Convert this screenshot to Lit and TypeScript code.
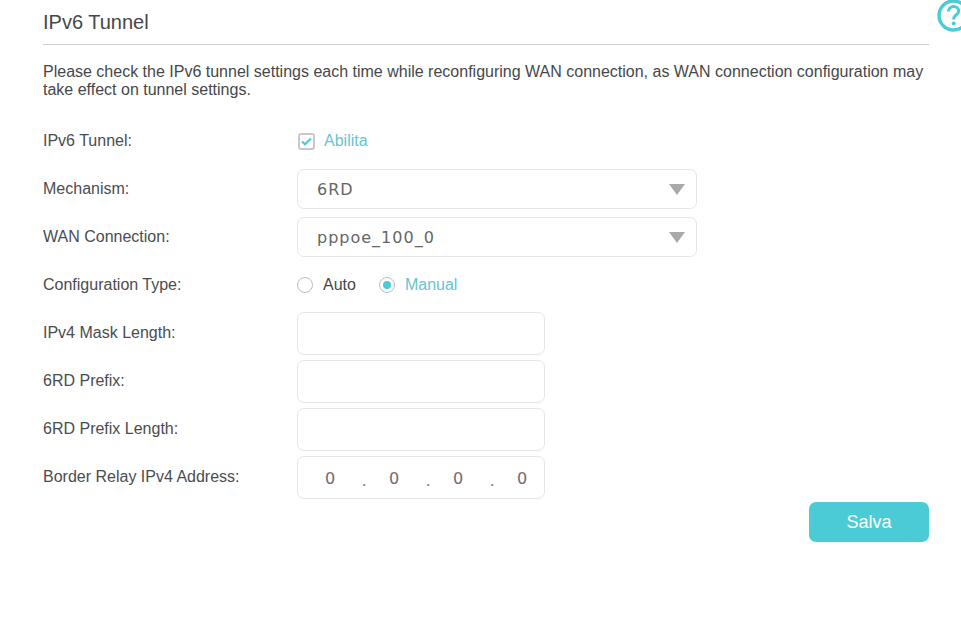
import { LitElement, html, css } from "lit";
import { customElement } from "lit/decorators.js";

@customElement("app-root")
export class AppRoot extends LitElement {
  static styles = css`
    :host { display: block; position: relative; width: 961px; height: 623px; overflow: hidden; background: #fff;
      font-family: "Liberation Sans", Arial, sans-serif; color: #4a4d4f; font-size: 16px; }
    .page { padding: 0 32px 0 43px; display: flex; flex-direction: column; }
    h1 { margin: 0; height: 44px; box-sizing: border-box; border-bottom: 1px solid #cfcfcf; margin-left: 0;
      font-size: 20px; font-weight: 400; line-height: 44px; color: #45484a; box-sizing: content-box; }
    .note { margin: 18px 0 0; line-height: 18px; color: #45484a; height: 54px; }
    .rows { display: flex; flex-direction: column; margin-top: 0; }
    .row { display: grid; grid-template-columns: 254px 1fr; align-items: center; }
    .r48 { height: 48px; }
    .label { color: #4a4d4f; position: relative; top: 0; }
    .select, .input { box-sizing: border-box; border: 1px solid #e6e6e6; border-radius: 7px; background: #fff; }
    .select { width: 400px; height: 40px; display: flex; align-items: center; justify-content: space-between;
      padding: 0 11px 0 19px; font-family: "DejaVu Sans", sans-serif; letter-spacing: 1px; color: #666; font-size: 16px; }
    .arrow { width: 16px; height: 11px; }
    .input { width: 248px; height: 43px; }
    .ip { display: grid; grid-template-columns: repeat(4, 64px); padding: 0 0 0 0; font-family: "DejaVu Sans", sans-serif; color: #6d6d6d; font-size: 16px; line-height: 43px; align-items: center; }
    .ip span { position: relative; text-align: center; padding-left: 0; }
    .ip .dot { position: absolute; right: -4px; top: 4px; font-size: 10px; color: #888; }
    .opts { display: flex; align-items: center; }
    .check { box-sizing: border-box; width: 17px; height: 17px; border: 2px solid #c9c9c9; border-radius: 3px; margin: 0 9px 0 1px; display: flex; align-items: center; justify-content: center; }
    .radio { box-sizing: border-box; width: 16px; height: 16px; border: 1.5px solid #bdbdbd; border-radius: 50%; margin-right: 10px; display: flex; align-items: center; justify-content: center; background: #fff; }
    .radio i { width: 8px; height: 8px; border-radius: 50%; background: #4acbd6; }
    .on { color: #69c3d0; }
    .auto { margin-right: 23px; color: #45484a; }
    .actions { display: flex; justify-content: flex-end; margin-top: 1px; }
    .btn { width: 120px; height: 40px; border: 0; border-radius: 7px; background: #4acbd6; color: #fff; font: 18px "Liberation Sans", Arial, sans-serif; }
    .help { position: absolute; left: 937px; top: -1px; width: 33px; height: 33px; }
  `;

  row(label: string, body: unknown, cls = "r48") {
    return html`<div class="row ${cls}"><div class="label">${label}</div><div>${body}</div></div>`;
  }

  select(v: string) {
    return html`<div class="select"><span>${v}</span>
      <svg class="arrow" viewBox="0 0 16 11"><path d="M0 0H16L8 11Z" fill="#a9a9a9"/></svg></div>`;
  }

  render() {
    return html`
      <svg class="help" viewBox="0 0 33 33">
        <circle cx="16.5" cy="16.5" r="14.5" fill="none" stroke="#4acbd6" stroke-width="3.4"/>
        <path d="M11.5 12.5c0-3 2.2-5 5.2-5s5 1.9 5 4.5c0 2-1.1 3-2.7 4.1-1.5 1-2.3 1.8-2.3 3.6v.8" fill="none" stroke="#4acbd6" stroke-width="3"/>
        <circle cx="16.7" cy="24.5" r="2" fill="#4acbd6"/>
      </svg>
      <div class="page">
        <h1>IPv6 Tunnel</h1>
        <p class="note">Please check the IPv6 tunnel settings each time while reconfiguring WAN connection, as WAN connection configuration may take effect on tunnel settings.</p>
        <div class="rows">
          ${this.row("IPv6 Tunnel:", html`<div class="opts"><span class="check">
            <svg width="11" height="9" viewBox="0 0 11 9"><path d="M1 4.5L4 7.2L10 1.5" fill="none" stroke="#4acbd6" stroke-width="2.2"/></svg>
          </span><span class="on">Abilita</span></div>`)}
          ${this.row("Mechanism:", this.select("6RD"))}
          ${this.row("WAN Connection:", this.select("pppoe_100_0"))}
          ${this.row("Configuration Type:", html`<div class="opts">
            <span class="radio"></span><span class="auto">Auto</span>
            <span class="radio"><i></i></span><span class="on">Manual</span></div>`)}
          ${this.row("IPv4 Mask Length:", html`<div class="input"></div>`)}
          ${this.row("6RD Prefix:", html`<div class="input"></div>`)}
          ${this.row("6RD Prefix Length:", html`<div class="input"></div>`)}
          ${this.row("Border Relay IPv4 Address:", html`<div class="input ip">
            <span>0<b class="dot">.</b></span><span>0<b class="dot">.</b></span><span>0<b class="dot">.</b></span><span>0</span></div>`)}
        </div>
        <div class="actions"><button class="btn">Salva</button></div>
      </div>
    `;
  }
}
